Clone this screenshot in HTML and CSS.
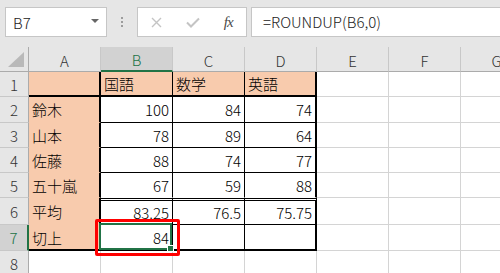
FILE: index.html
```html
<!DOCTYPE html>
<html lang="ja">
<head>
    <meta charset="UTF-8">
    <title>ROUNDUP</title>
    <link rel="stylesheet" href="styles.css">
</head>
<body>
    <div class="excel">
        <div class="formula-bar">
            <div class="name-box">
                <span>B7</span>
                <span class="dropdown"></span>
            </div>
            <div class="grip"><i></i><i></i><i></i></div>
            <div class="fx-buttons">
                <span class="fx-btn">
                    <svg width="11" height="11" viewBox="0 0 11 11"><path d="M1 1 L10 10 M10 1 L1 10" stroke="#c4c4c4" stroke-width="1.4" fill="none"/></svg>
                </span>
                <span class="fx-btn">
                    <svg width="14" height="11" viewBox="0 0 14 11"><path d="M1 5.5 L5 9.5 L13 1.5" stroke="#c4c4c4" stroke-width="2" fill="none"/></svg>
                </span>
                <span class="fx-btn fx">fx</span>
            </div>
            <div class="formula-input">=ROUNDUP(B6,0)</div>
        </div>

        <div class="sheet">
            <div class="corner"><span class="corner-tri"></span></div>
            <div class="col-head">A</div>
            <div class="col-head active">B</div>
            <div class="col-head">C</div>
            <div class="col-head">D</div>
            <div class="col-head">E</div>
            <div class="col-head">F</div>
            <div class="col-head">G</div>

            <!-- row 1 -->
            <div class="row-head">1</div>
            <div class="cell name-col thick-bottom"></div>
            <div class="cell peach line-right thick-bottom">国語</div>
            <div class="cell peach line-right thick-bottom">数学</div>
            <div class="cell peach thick-right thick-bottom">英語</div>
            <div class="cell"></div>
            <div class="cell"></div>
            <div class="cell"></div>

            <!-- row 2 -->
            <div class="row-head">2</div>
            <div class="cell name-col">鈴木</div>
            <div class="cell num line-right line-bottom">100</div>
            <div class="cell num line-right line-bottom">84</div>
            <div class="cell num thick-right line-bottom">74</div>
            <div class="cell"></div>
            <div class="cell"></div>
            <div class="cell"></div>

            <!-- row 3 -->
            <div class="row-head">3</div>
            <div class="cell name-col">山本</div>
            <div class="cell num line-right line-bottom">78</div>
            <div class="cell num line-right line-bottom">89</div>
            <div class="cell num thick-right line-bottom">64</div>
            <div class="cell"></div>
            <div class="cell"></div>
            <div class="cell"></div>

            <!-- row 4 -->
            <div class="row-head">4</div>
            <div class="cell name-col">佐藤</div>
            <div class="cell num line-right line-bottom">88</div>
            <div class="cell num line-right line-bottom">74</div>
            <div class="cell num thick-right line-bottom">77</div>
            <div class="cell"></div>
            <div class="cell"></div>
            <div class="cell"></div>

            <!-- row 5 -->
            <div class="row-head">5</div>
            <div class="cell name-col">五十嵐</div>
            <div class="cell num line-right no-bottom">67</div>
            <div class="cell num line-right no-bottom">59</div>
            <div class="cell num thick-right no-bottom">88</div>
            <div class="cell"></div>
            <div class="cell"></div>
            <div class="cell"></div>

            <!-- row 6 -->
            <div class="row-head">6</div>
            <div class="cell name-col">平均</div>
            <div class="cell num line-right line-bottom double-top">83.25</div>
            <div class="cell num line-right line-bottom double-top">76.5</div>
            <div class="cell num thick-right line-bottom double-top">75.75</div>
            <div class="cell"></div>
            <div class="cell"></div>
            <div class="cell"></div>

            <!-- row 7 -->
            <div class="row-head active">7</div>
            <div class="cell name-col thick-bottom">切上</div>
            <div class="cell num line-right thick-bottom selected">
                84
                <span class="selection"><span class="fill-handle"></span></span>
                <span class="highlight"></span>
            </div>
            <div class="cell num line-right thick-bottom"></div>
            <div class="cell num thick-right thick-bottom"></div>
            <div class="cell"></div>
            <div class="cell"></div>
            <div class="cell"></div>

            <!-- row 8 -->
            <div class="row-head">8</div>
            <div class="cell"></div>
            <div class="cell"></div>
            <div class="cell"></div>
            <div class="cell"></div>
            <div class="cell"></div>
            <div class="cell"></div>
            <div class="cell"></div>
        </div>
    </div>
</body>
</html>
```

FILE: styles.css
```css
html, body {
    margin: 0;
    padding: 0;
}

body {
    width: 500px;
    height: 273px;
    overflow: hidden;
    background-color: #ffffff;
    font-family: "Noto Sans CJK JP", "Noto Sans", sans-serif;
    font-weight: 300;
    color: #000000;
}

.excel {
    width: 500px;
    height: 273px;
    overflow: hidden;
}

/* formula bar */

.formula-bar {
    height: 47px;
    box-sizing: border-box;
    padding-top: 7px;
    background-color: #e6e6e6;
    display: flex;
    align-items: flex-start;
}

.name-box,
.fx-buttons,
.formula-input {
    height: 30px;
    box-sizing: border-box;
    background-color: #ffffff;
    border: 1px solid #c6c6c6;
}

.name-box {
    width: 102px;
    margin-left: 5px;
    padding: 0 7px 0 7px;
    display: flex;
    align-items: center;
    justify-content: space-between;
    font-size: 15px;
    color: #222222;
}

.dropdown {
    width: 0;
    height: 0;
    border-left: 4px solid transparent;
    border-right: 4px solid transparent;
    border-top: 4px solid #666666;
    margin-top: -2px;
}

.grip {
    width: 30px;
    height: 30px;
    display: flex;
    flex-direction: column;
    align-items: center;
    justify-content: center;
    gap: 2px;
}

.grip i {
    display: block;
    width: 2px;
    height: 2px;
    background-color: #9c9c9c;
}

.fx-buttons {
    width: 110px;
    padding-left: 1px;
    display: flex;
    align-items: center;
}

.fx-btn {
    width: 36px;
    display: flex;
    justify-content: center;
    align-items: center;
}

.fx {
    font-family: "Liberation Serif", "DejaVu Serif", serif;
    font-style: italic;
    font-weight: 400;
    font-size: 15px;
    color: #4a4a4a;
    letter-spacing: -1px;
}

.formula-input {
    flex: 1;
    margin-left: 4px;
    margin-right: -6px;
    padding-left: 11px;
    font-size: 15px;
    line-height: 28px;
    color: #222222;
}

/* sheet grid */

.sheet {
    display: grid;
    grid-template-columns: 29px repeat(7, 72px);
    grid-template-rows: 25px 25px 26px 25px 25px 25px 27px 26px 26px;
}

.corner,
.col-head,
.row-head {
    background-color: #e6e6e6;
    box-sizing: border-box;
    font-size: 15px;
    color: #333333;
    display: flex;
    align-items: center;
    justify-content: center;
}

.corner {
    position: relative;
    border-right: 1px solid #ababab;
    border-bottom: 1px solid #ababab;
}

.corner-tri {
    position: absolute;
    right: 4px;
    bottom: 4px;
    width: 0;
    height: 0;
    border-left: 16px solid transparent;
    border-bottom: 15px solid #b9b9b9;
}

.col-head {
    border-right: 1px solid #c8c8c8;
    border-bottom: 1px solid #ababab;
    padding-top: 2px;
}

.col-head.active {
    background-color: #d2d2d2;
    color: #217346;
    border-bottom: 2px solid #217346;
}

.row-head {
    border-right: 1px solid #ababab;
    border-bottom: 1px solid #c8c8c8;
}

.row-head.active {
    background-color: #d2d2d2;
    color: #217346;
    border-right: 2px solid #217346;
}

.cell {
    box-sizing: border-box;
    border-right: 1px solid #d4d4d4;
    border-bottom: 1px solid #d4d4d4;
    padding: 0 3px;
    display: flex;
    align-items: center;
    font-size: 15px;
    white-space: nowrap;
}

.num {
    justify-content: flex-end;
}

.peach {
    background-color: #f8cbad;
}

.name-col {
    background-color: #f8cbad;
    border-right: 2px solid #000000;
    border-bottom-color: transparent;
}

.line-right {
    border-right: 1px solid #000000;
}

.thick-right {
    border-right: 2px solid #000000;
}

.line-bottom {
    border-bottom: 1px solid #000000;
}

.no-bottom {
    border-bottom-color: transparent;
}

.double-top {
    border-top: 3px double #000000;
}

.thick-bottom {
    border-bottom: 2px solid #000000;
}

/* active cell */

.selected {
    position: relative;
}

.selection {
    position: absolute;
    left: -2px;
    top: -2px;
    right: 0;
    bottom: -1px;
    border: 2px solid #217346;
    z-index: 2;
}

.fill-handle {
    position: absolute;
    right: -4px;
    bottom: -4px;
    width: 5px;
    height: 5px;
    background-color: #217346;
    border: 1px solid #ffffff;
}

.highlight {
    position: absolute;
    left: -6px;
    top: -6px;
    right: -8px;
    bottom: -7px;
    border: 3px solid #ff0000;
    border-radius: 2px;
    z-index: 3;
}
```
